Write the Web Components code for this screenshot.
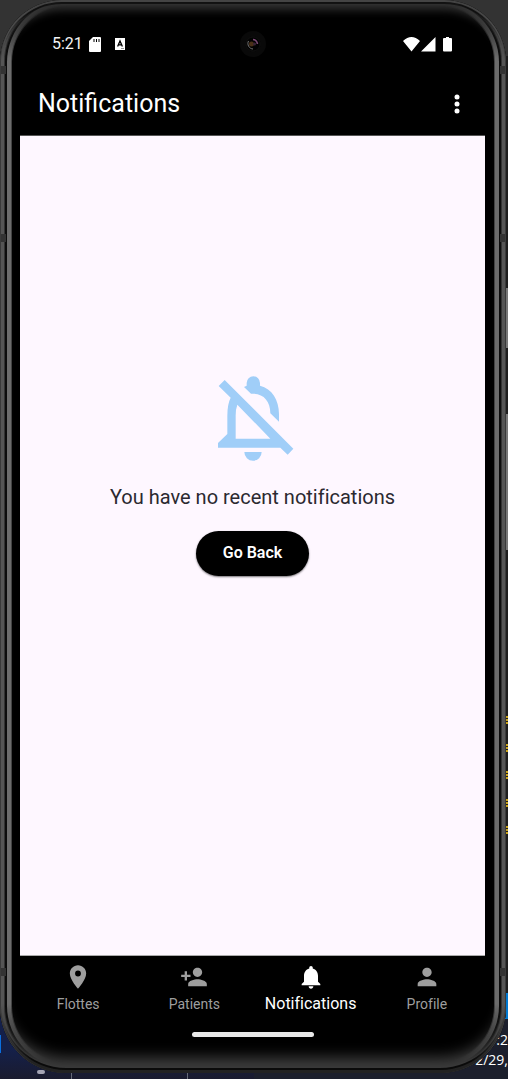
<!DOCTYPE html>
<html lang="en">
<head>
<meta charset="utf-8">
<meta name="viewport" content="width=device-width, initial-scale=1">
<title>Notifications</title>
<style>
html, body { margin: 0; }
body { font-family: Roboto, "Liberation Sans", sans-serif; background: #1e1e1e; }
</style>
</head>
<body>
<desk-top>
  <phone-frame>
    <status-bar time="5:21"></status-bar>
    <app-bar>Notifications</app-bar>
    <empty-state action="Go Back">You have no recent notifications</empty-state>
    <nav-bar>
      <nav-item icon="pin">Flottes</nav-item>
      <nav-item icon="add">Patients</nav-item>
      <nav-item icon="bell" active>Notifications</nav-item>
      <nav-item icon="person">Profile</nav-item>
    </nav-bar>
  </phone-frame>
</desk-top>
<script>
const define = (name, render) => customElements.define(name, class extends HTMLElement {
  constructor() { super(); this.attachShadow({ mode: 'open' }); }
  connectedCallback() { this.shadowRoot.innerHTML = render(this); }
});

define('desk-top', () => `
<style>
:host { display: block; position: relative; overflow: hidden; min-height: 100vh; box-sizing: border-box; padding: 0 2px 6px 0;
  background: linear-gradient(#333 0 56px, #1e1e1e 56px calc(100% - 86px), #0078d0 calc(100% - 86px) calc(100% - 60px), #1c1f2c calc(100% - 60px)); }
.left { position: absolute; left: 0; top: 0; width: 50%; height: 100%; background: linear-gradient(#333 0 300px, #14204a 300px calc(100% - 30px), #1a1b2e); }
.edge { position: absolute; left: 0; bottom: 26px; width: 1px; height: 18px; background: #0a6fe0; }
.dot { position: absolute; left: 37px; bottom: 5px; width: 8px; height: 4px; border-radius: 2px; background: #a4a4b4; }
.tick { position: absolute; bottom: 0; width: 1px; height: 6px; background: #666a78; }
.pane { position: absolute; right: 0; top: 288px; width: 2px; height: 60px; background: #777; }
.pane.b { top: 414px; height: 136px; }
.clock { position: absolute; right: 0; bottom: 9px; display: flex; flex-direction: column; align-items: flex-end; width: 32px; color: #fff; font: 14px/20px "Open Sans", "Noto Sans", sans-serif; white-space: nowrap; }
.y { position: absolute; right: 0; width: 2px; height: 8px; background: repeating-linear-gradient(#c8a21a 0 2px, #1e1e1e 2px 3px); }
slot { position: relative; display: block; }
</style>
<div class="left"></div><div class="edge"></div><div class="dot"></div>
<div class="tick" style="left:71px"></div><div class="tick" style="left:187px"></div>
<div class="pane"></div><div class="pane b"></div>
${[716, 744, 771, 799, 826].map(t => `<div class="y" style="top:${t}px"></div>`).join('')}
<div class="clock"><span>:2</span><span>2/29,</span></div>
<slot></slot>`);

define('phone-frame', () => `
<style>
:host { position: relative; display: flex; flex-direction: column; box-sizing: border-box; min-height: calc(100vh - 6px); padding: 0 21px 0 20px; border-radius: 62px 62px 66px 66px; overflow: hidden; background: #000;
  box-shadow: inset 0 1px 0 1px #444, inset 0 3px 0 1px #111, inset 0 -2px 0 1px #222, inset 0 -4px 0 1px #0a0a0a, inset 0 -16px 14px #3c3c3c, inset 0 10px 9px #303030; }
:host::before { content: ""; position: absolute; inset: -6px 0 -1px; border-radius: 68px; pointer-events: none;
  box-shadow: inset 0 0 0 1px #3a3a3a, inset 0 0 0 4px #555, inset 0 0 0 5px #333, inset 0 0 0 7px #0c0c0c, inset 0 0 0 11px #6c6c6c, inset 0 0 0 12px #444;
  -webkit-mask-image: linear-gradient(#0000 8px, #000 64px calc(100% - 70px), #0000 calc(100% - 12px));
  mask-image: linear-gradient(#0000 8px, #000 64px calc(100% - 70px), #0000 calc(100% - 12px)); }
i { position: absolute; width: 5px; height: 8px; background: #333; }
.l { left: 1px; } .r { right: 1px; }
</style>
<i class="l" style="top:66px"></i><i class="r" style="top:66px"></i>
<i class="l" style="top:234px"></i><i class="r" style="top:234px"></i>
<i class="l" style="top:968px"></i><i class="r" style="top:968px"></i>
<slot></slot>`);

define('status-bar', el => `
<style>
:host { display: grid; grid-template-columns: 1fr auto 1fr; align-items: center; height: 56px; padding: 16px 32px 0; color: #f4f4f4; font-size: 16px; line-height: 20px; }
div { display: flex; align-items: center; }
.end { justify-content: flex-end; }
svg { display: block; }
.sd { margin-left: 6px; }
.kb { margin-left: 14px; }
</style>
<div><span>${el.getAttribute('time')}</span>
<svg class="sd" width="12" height="15" viewBox="0 0 12 15"><path fill="#fff" d="M4 0h7a1 1 0 0 1 1 1v13a1 1 0 0 1-1 1H1a1 1 0 0 1-1-1V4z"/><path stroke="#000" d="M5 2v3M7.500 2v3M10 2v3"/></svg>
<svg class="kb" width="10" height="12" viewBox="0 0 10 12"><rect width="10" height="12" fill="#fff"/><path d="M2.600 8.500 5 3l2.400 5.500M3.500 6.800h3" fill="none" stroke="#000" stroke-width="1.300"/><path d="M6 10.500h3" stroke="#999"/></svg></div>
<svg width="28" height="28" viewBox="0 0 28 28"><circle cx="14" cy="14" r="13" fill="#090909"/><circle cx="14" cy="14" r="7" fill="#020202" stroke="#101010"/><path d="M9.500 11a5.500 5.500 0 0 0 4.500 8" stroke="#777" fill="none"/><circle cx="12.500" cy="14" r="2.500" fill="#4a3018"/><path d="M14 9.500a5 5 0 0 1 4.500 4.500" stroke="#7a4a74" stroke-width="1.500" fill="none"/><circle cx="15.500" cy="14" r="1.500" fill="#3b2438"/></svg>
<div class="end"><svg width="50" height="15" viewBox="0 0 50 15" fill="#fff"><path d="M0 4Q8.500-4 17 4L8.500 14.500zM32.500 0v14.500H18zM43 1V0h3v1h2a1 1 0 0 1 1 1v11.500a1 1 0 0 1-1 1h-7a1 1 0 0 1-1-1V2a1 1 0 0 1 1-1z"/></svg></div>`);

define('app-bar', () => `
<style>
:host { display: flex; align-items: center; justify-content: space-between; height: 63px; padding: 0 18px; border-bottom: 1px solid #555; color: #fff; }
h1 { margin: 0; font-size: 25px; line-height: 32px; font-weight: 400; }
button { border: 0; padding: 0; width: 20px; height: 28px; background: none; display: grid; place-items: center; }
</style>
<h1><slot></slot></h1>
<button aria-label="More options"><svg width="6" height="20" viewBox="0 0 6 20" fill="#fff"><circle cx="3" cy="3" r="2.500"/><circle cx="3" cy="10" r="2.500"/><circle cx="3" cy="17" r="2.500"/></svg></button>`);

define('empty-state', el => `
<style>
:host { flex: 1; display: flex; flex-direction: column; align-items: center; justify-content: center; padding-bottom: 140px; background: #fef7ff; color: #2b2930; }
p { margin: 23px 0 21px; font-size: 20px; line-height: 26px; text-align: center; font-variant-ligatures: none; }
button { border: 0; height: 45px; padding: 0 27px; border-radius: 23px; background: #000; color: #fff; font: 600 16px/20px Roboto, sans-serif; box-shadow: 0 1px 2px #0008; }
</style>
<svg width="82" height="85" viewBox="63 46 246 255" fill="#a0cef8"><path fill-rule="evenodd" d="M101 58 307 264 290 282 268 261H81V247L109 220V165Q109 130 119 111L83 76ZM139 132 238 234H134V165Q134 145 139 132Z"/><path d="M159 79 167 75V67a20 20 0 0 1 40 0V75C243 84 264 118 264 160V183L238 158C238 122 218 99 186 99H180ZM160 274H212a26 26 0 0 1-52 0Z"/></svg>
<p><slot></slot></p>
<button>${el.getAttribute('action')}</button>`);

define('nav-bar', () => `
<style>
:host { display: block; border-top: 1px solid #aaa; }
nav { display: grid; grid-template-columns: repeat(4, 1fr); height: 74px; }
.home { width: 122px; height: 5px; margin: 2px auto 36px; border-radius: 3px; background: #e8e8e8; }
</style>
<nav><slot></slot></nav><div class="home"></div>`);

const icons = {
  pin: 'M12 2C8.130 2 5 5.130 5 9c0 5.250 7 13 7 13s7-7.750 7-13c0-3.870-3.130-7-7-7zm0 9.500a2.500 2.500 0 0 1 0-5 2.500 2.500 0 0 1 0 5z',
  add: 'M15 12c2.210 0 4-1.790 4-4s-1.790-4-4-4-4 1.790-4 4 1.790 4 4 4zm-9-2V7H4v3H1v2h3v3h2v-3h3v-2H6zm9 4c-2.670 0-8 1.340-8 4v2h16v-2c0-2.660-5.330-4-8-4z',
  bell: 'M12 22c1.100 0 2-.9 2-2h-4c0 1.100.89 2 2 2zm6-6v-5c0-3.070-1.640-5.640-4.500-6.320V4c0-.83-.67-1.500-1.500-1.500s-1.500.67-1.500 1.500v.68C7.630 5.360 6 7.920 6 11v5l-2 2v1h16v-1l-2-2z',
  person: 'M12 12c2.210 0 4-1.790 4-4s-1.790-4-4-4-4 1.790-4 4 1.790 4 4 4zm0 2c-2.670 0-8 1.340-8 4v2h16v-2c0-2.660-5.330-4-8-4z'
};
define('nav-item', el => `
<style>
:host { display: block; color: #9e9e9e; font-size: 14px; font-variant-ligatures: none; }
:host([active]) { color: #fff; font-size: 16px; }
a { display: flex; flex-direction: column; align-items: center; padding-top: 7px; color: inherit; text-decoration: none; line-height: 20px; }
svg { display: block; margin-bottom: 3px; }
</style>
<a href="#"><svg width="28" height="28" viewBox="0 0 24 24" fill="currentColor"><path d="${icons[el.getAttribute('icon')]}"/></svg><span><slot></slot></span></a>`);
</script>
</body>
</html>
